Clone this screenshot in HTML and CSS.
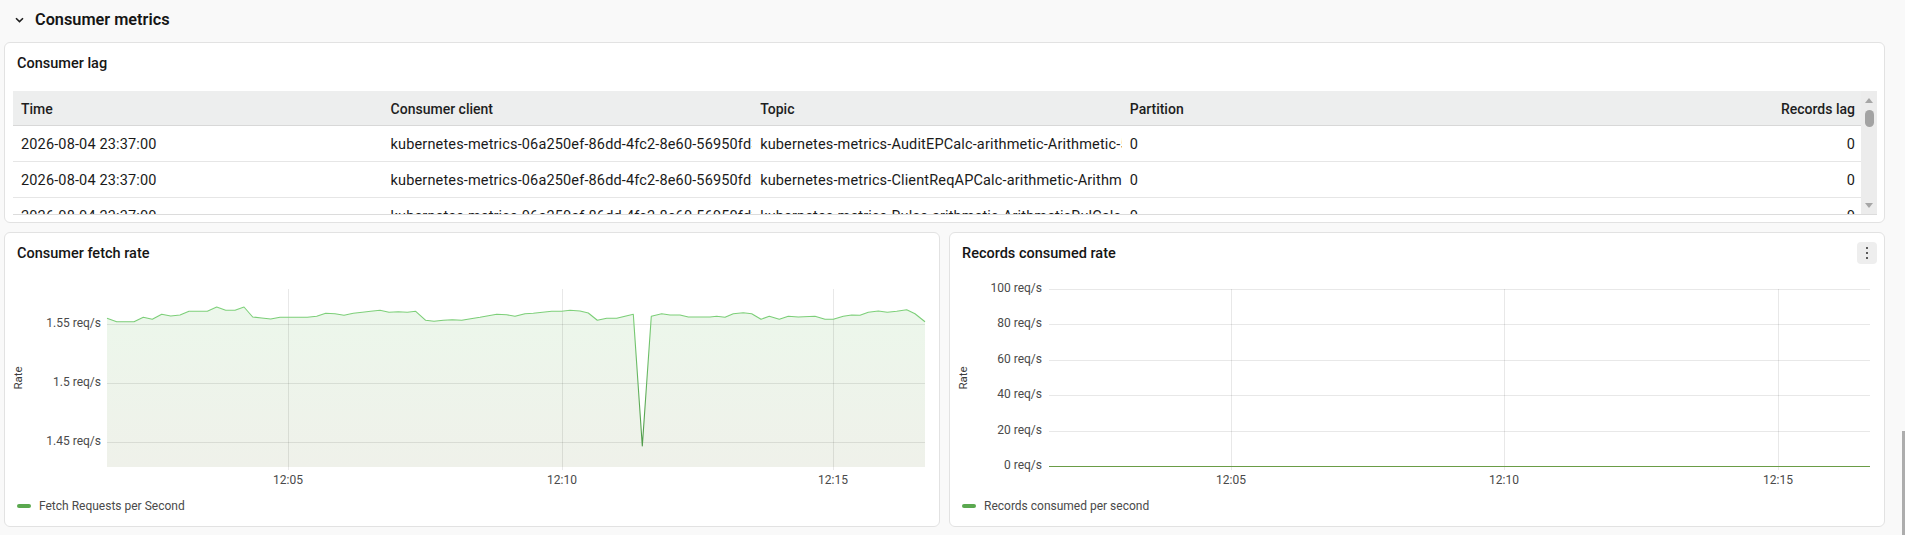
FILE: index.html
```html
<!DOCTYPE html>
<html lang="en">
<head>
<meta charset="utf-8">
<title>Consumer metrics</title>
<link rel="stylesheet" href="styles.css">
</head>
<body>
<main class="page">
  <section class="section">
    <header class="section-head">
      <svg class="chevron" width="9" height="6" viewBox="0 0 9 6"><path d="M1 1.2 L4.5 4.6 L8 1.2" fill="none" stroke="#1f1f1f" stroke-width="1.6"/></svg>
      <h2 class="section-title">Consumer metrics</h2>
    </header>

    <div class="card lag-card">
      <h3 class="card-title">Consumer lag</h3>
      <div class="table-wrap">
        <div class="table-clip">
          <table class="lag-table">
            <thead>
              <tr><th>Time</th><th>Consumer client</th><th class="topic-h">Topic</th><th>Partition</th><th class="num">Records lag</th></tr>
            </thead>
            <tbody>
              <tr><td>2026-08-04 23:37:00</td><td>kubernetes-metrics-06a250ef-86dd-4fc2-8e60-56950fd3a1b7-StreamThread-1-consumer</td><td>kubernetes-metrics-AuditEPCalc-arithmetic-Arithmetic-5-changelog</td><td>0</td><td class="num">0</td></tr>
              <tr><td>2026-08-04 23:37:00</td><td>kubernetes-metrics-06a250ef-86dd-4fc2-8e60-56950fd3a1b7-StreamThread-1-consumer</td><td>kubernetes-metrics-ClientReqAPCalc-arithmetic-Arithmetic-changelog</td><td>0</td><td class="num">0</td></tr>
              <tr><td>2026-08-04 23:37:00</td><td>kubernetes-metrics-06a250ef-86dd-4fc2-8e60-56950fd3a1b7-StreamThread-1-consumer</td><td>kubernetes-metrics-Rules-arithmetic-ArithmeticRulCalc-changelog</td><td>0</td><td class="num">0</td></tr>
            </tbody>
          </table>
        </div>
        <div class="vscroll">
          <span class="arrow up"></span>
          <span class="thumb"></span>
          <span class="spacer"></span>
          <span class="arrow down"></span>
        </div>
      </div>
    </div>

    <div class="chart-grid">
      <div class="card chart-card">
        <div class="chart-head">
          <h3 class="card-title">Consumer fetch rate</h3>
        </div>
        <svg class="chart" width="934" height="226" viewBox="1 32 934 226">
          <defs>
            <linearGradient id="fillG" gradientUnits="userSpaceOnUse" x1="0" y1="75" x2="0" y2="235">
              <stop offset="0" stop-color="#ecf7eb"/>
              <stop offset="1" stop-color="#eff1ea"/>
            </linearGradient>
            <linearGradient id="lineG" gradientUnits="userSpaceOnUse" x1="0" y1="75" x2="0" y2="214">
              <stop offset="0" stop-color="#80d27c"/>
              <stop offset="0.2" stop-color="#74c770"/>
              <stop offset="1" stop-color="#4f9a48"/>
            </linearGradient>
          </defs>
          <path class="area" d="M103,86.3 L112.7,89.7 L130,89.7 L139.3,85.3 L148.3,87.3 L157.7,82.3 L166.7,84 L176,83 L185,79.3 L203.3,79.3 L212.7,75 L221.7,78.3 L231,78.3 L240,75 L248.7,85 L257.7,86 L266.7,87 L276,85.3 L303.3,85.3 L312.7,84.3 L321.7,81.3 L331,81.7 L340,83.3 L349.3,81.3 L358.3,80.3 L366.7,79.3 L376,78.3 L385,80.3 L394.3,79.7 L403.3,80.3 L411.7,79.3 L421.7,88.3 L430,89.3 L439.3,88.3 L448.3,87.7 L457.7,88.3 L466.7,86.7 L476,85.3 L492.7,82.3 L502.7,82.7 L511,84.3 L521,81.7 L529.3,81.3 L547.7,79.3 L557.7,79.3 L566,78.3 L576,79 L584.3,81 L593.3,88.3 L602.7,86.3 L612.7,86.3 L629.3,82.3 L638.3,214 L647.3,84.3 L657.7,81.7 L666,83 L676,83 L684.3,85 L706,85 L712.7,84.3 L721,85.3 L729.3,81.7 L739.3,80.7 L747.7,81.7 L757,87.3 L765.3,84.3 L775.3,87.3 L784.3,84.3 L794.3,85 L811,84.3 L821,87.3 L829.3,87.3 L839.3,84.3 L847.7,83 L856,83.3 L864.3,80.3 L874.3,79 L883.3,80.3 L892.7,79.3 L902.7,77.7 L911,81.7 L921,89.7 L921,235 L103,235 Z"/>
          <g class="grid">
            <line x1="103" y1="92.5" x2="921" y2="92.5"/>
            <line x1="103" y1="151.5" x2="921" y2="151.5"/>
            <line x1="103" y1="210.5" x2="921" y2="210.5"/>
            <line x1="284.5" y1="57" x2="284.5" y2="238"/>
            <line x1="558.5" y1="57" x2="558.5" y2="238"/>
            <line x1="829.5" y1="57" x2="829.5" y2="238"/>
          </g>
          <path class="line" stroke="url(#lineG)" d="M103,86.3 L112.7,89.7 L130,89.7 L139.3,85.3 L148.3,87.3 L157.7,82.3 L166.7,84 L176,83 L185,79.3 L203.3,79.3 L212.7,75 L221.7,78.3 L231,78.3 L240,75 L248.7,85 L257.7,86 L266.7,87 L276,85.3 L303.3,85.3 L312.7,84.3 L321.7,81.3 L331,81.7 L340,83.3 L349.3,81.3 L358.3,80.3 L366.7,79.3 L376,78.3 L385,80.3 L394.3,79.7 L403.3,80.3 L411.7,79.3 L421.7,88.3 L430,89.3 L439.3,88.3 L448.3,87.7 L457.7,88.3 L466.7,86.7 L476,85.3 L492.7,82.3 L502.7,82.7 L511,84.3 L521,81.7 L529.3,81.3 L547.7,79.3 L557.7,79.3 L566,78.3 L576,79 L584.3,81 L593.3,88.3 L602.7,86.3 L612.7,86.3 L629.3,82.3 L638.3,214 L647.3,84.3 L657.7,81.7 L666,83 L676,83 L684.3,85 L706,85 L712.7,84.3 L721,85.3 L729.3,81.7 L739.3,80.7 L747.7,81.7 L757,87.3 L765.3,84.3 L775.3,87.3 L784.3,84.3 L794.3,85 L811,84.3 L821,87.3 L829.3,87.3 L839.3,84.3 L847.7,83 L856,83.3 L864.3,80.3 L874.3,79 L883.3,80.3 L892.7,79.3 L902.7,77.7 L911,81.7 L921,89.7"/>
          <g class="ylabels">
            <text x="97" y="92">1.55 req/s</text>
            <text x="97" y="151">1.5 req/s</text>
            <text x="97" y="210">1.45 req/s</text>
          </g>
          <g class="xlabels">
            <text x="284" y="249">12:05</text>
            <text x="558" y="249">12:10</text>
            <text x="829" y="249">12:15</text>
          </g>
          <text class="axis-title" transform="translate(15 146) rotate(-90)">Rate</text>
        </svg>
        <div class="legend"><span class="swatch"></span>Fetch Requests per Second</div>
      </div>

      <div class="card chart-card">
        <div class="chart-head">
          <h3 class="card-title">Records consumed rate</h3>
          <button class="kebab" type="button" aria-label="Actions"><span></span><span></span><span></span></button>
        </div>
        <svg class="chart" width="934" height="226" viewBox="1 32 934 226">
          <g class="grid">
            <line x1="100" y1="57.5" x2="921" y2="57.5"/>
            <line x1="100" y1="92.5" x2="921" y2="92.5"/>
            <line x1="100" y1="128.5" x2="921" y2="128.5"/>
            <line x1="100" y1="163.5" x2="921" y2="163.5"/>
            <line x1="100" y1="199.5" x2="921" y2="199.5"/>
            <line x1="282.5" y1="57" x2="282.5" y2="238"/>
            <line x1="555.5" y1="57" x2="555.5" y2="238"/>
            <line x1="829.5" y1="57" x2="829.5" y2="238"/>
          </g>
          <line class="zero" x1="100" y1="234.5" x2="921" y2="234.5"/>
          <g class="ylabels">
            <text x="93" y="57">100 req/s</text>
            <text x="93" y="92">80 req/s</text>
            <text x="93" y="128">60 req/s</text>
            <text x="93" y="163">40 req/s</text>
            <text x="93" y="199">20 req/s</text>
            <text x="93" y="234">0 req/s</text>
          </g>
          <g class="xlabels">
            <text x="282" y="249">12:05</text>
            <text x="555" y="249">12:10</text>
            <text x="829" y="249">12:15</text>
          </g>
          <text class="axis-title" transform="translate(15 146) rotate(-90)">Rate</text>
        </svg>
        <div class="legend"><span class="swatch"></span>Records consumed per second</div>
      </div>
    </div>
  </section>
</main>
<div class="page-scroll"></div>
</body>
</html>
```

FILE: styles.css
```css
* { box-sizing: border-box; }

body {
  margin: 0;
  background: #f9f9f9;
  font-family: Roboto, "Liberation Sans", Arial, sans-serif;
  color: #151515;
}

.page {
  padding: 0 20px 0 4px;
}

.section-head {
  height: 42px;
  padding-bottom: 2px;
  display: flex;
  align-items: center;
}

.chevron {
  display: block;
  margin-left: 11px;
}

.section-title {
  margin: 0 0 0 11px;
  font-size: 16.3px;
  font-weight: 600;
  line-height: 22px;
  color: #151515;
}

.card {
  background: #fff;
  border: 1px solid #e2e2e2;
  border-radius: 6px;
}

.card-title {
  margin: 0;
  font-size: 14.5px;
  font-weight: 500;
  line-height: 20px;
  color: #151515;
}

/* Consumer lag card */
.lag-card {
  padding-bottom: 7px;
}

.lag-card .card-title {
  padding: 11px 12px 0;
}

.table-wrap {
  margin: 17px 7px 0 8px;
  height: 124px;
  display: flex;
  border-bottom: 1px solid #dcdcdc;
}

.table-clip {
  flex: 1;
  min-width: 0;
  overflow: hidden;
}

.lag-table {
  width: 100%;
  table-layout: fixed;
  border-collapse: separate;
  border-spacing: 0;
  font-size: 14px;
}

.lag-table th,
.lag-table td {
  white-space: nowrap;
  overflow: hidden;
  text-overflow: clip;
  text-align: left;
  line-height: 20px;
}

.lag-table th {
  padding: 8px 6px 6px 8px;
  background: #edeeee;
  font-weight: 500;
  color: #1e1e1e;
  border-bottom: 1px solid #d8d8d8;
}

.lag-table td {
  padding: 9px 0 6px 8px;
  border-bottom: 1px solid #e6e6e6;
  color: #1a1a1a;
  font-size: 14.5px;
  letter-spacing: 0.15px;
}

.lag-table .num {
  text-align: right;
  padding-right: 6px;
}

.vscroll {
  width: 16px;
  flex: none;
  background: #ececec;
  display: flex;
  flex-direction: column;
  align-items: center;
  padding: 7px 0 6px;
}

.vscroll .arrow {
  width: 0;
  height: 0;
  border-left: 4.5px solid transparent;
  border-right: 4.5px solid transparent;
}

.vscroll .up {
  border-bottom: 5px solid #a6a6a6;
}

.vscroll .down {
  border-top: 5px solid #a6a6a6;
}

.vscroll .thumb {
  margin-top: 7px;
  width: 9px;
  height: 17px;
  border-radius: 4.5px;
  background: #a3a3a3;
}

.vscroll .spacer {
  flex: 1;
}

/* chart cards */
.chart-grid {
  margin-top: 9px;
  display: grid;
  grid-template-columns: 1fr 1fr;
  gap: 9px;
}

.chart-card {
  padding-bottom: 12px;
}

.chart-head {
  height: 31px;
  padding: 9px 7px 0 12px;
  display: flex;
  align-items: center;
  justify-content: space-between;
}

.chart-head .card-title {
  padding-top: 2px;
}

.kebab {
  width: 20px;
  height: 22px;
  padding: 0;
  border: 0;
  border-radius: 4px;
  background: #eeeeee;
  display: flex;
  flex-direction: column;
  align-items: center;
  justify-content: center;
  gap: 2.5px;
}

.kebab span {
  width: 2.5px;
  height: 2.5px;
  border-radius: 50%;
  background: #2b2b2b;
}

.chart {
  display: block;
}

.chart text {
  font-family: Roboto, "Liberation Sans", Arial, sans-serif;
  font-size: 12px;
  fill: #4a4a4a;
  dominant-baseline: middle;
}

.chart .ylabels text {
  text-anchor: end;
}

.chart .xlabels text {
  text-anchor: middle;
}

.chart .axis-title {
  text-anchor: middle;
  font-size: 11.5px;
  fill: #3c3c3c;
}

.chart .grid line {
  stroke: #000;
  stroke-opacity: 0.09;
  stroke-width: 1;
  shape-rendering: crispEdges;
}

.chart .area {
  fill: url(#fillG);
  stroke: none;
}

.chart .line {
  fill: none;
  stroke-width: 1.1;
  stroke-linejoin: round;
}

.chart .zero {
  stroke: #6a9c46;
  stroke-width: 1;
  shape-rendering: crispEdges;
}

.legend {
  margin-top: 8px;
  padding-left: 12px;
  display: flex;
  align-items: center;
  font-size: 12px;
  line-height: 16px;
  color: #4a4a4a;
}

.swatch {
  width: 14px;
  height: 4px;
  border-radius: 2px;
  background: #5aa84f;
  margin-right: 8px;
}

.page-scroll {
  position: fixed;
  right: 0;
  top: 431px;
  width: 3px;
  height: 104px;
  background: #adadad;
}
```
